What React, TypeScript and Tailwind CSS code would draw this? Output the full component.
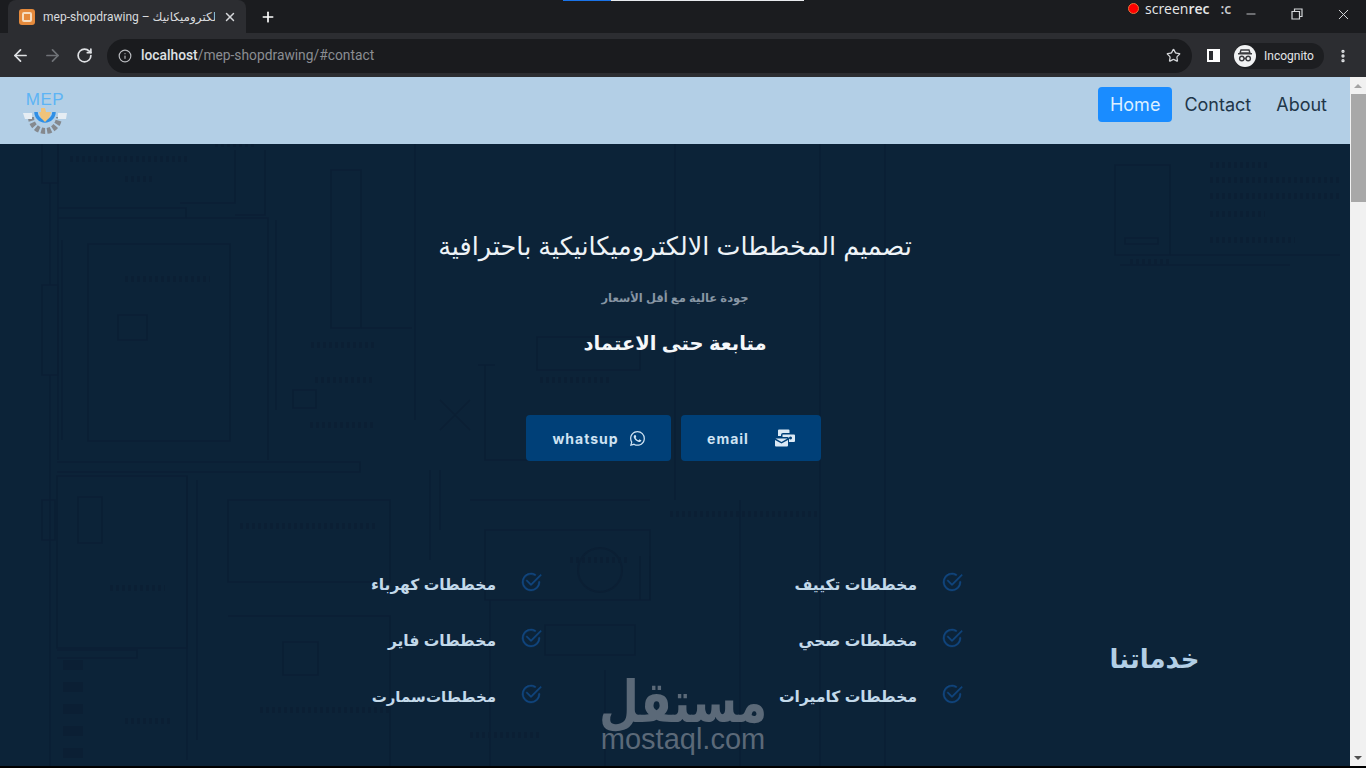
import React from "react";
import { ArrowLeft, ArrowRight, RotateCw, Info, Star, X, Plus, Minus, EllipsisVertical } from "lucide-react";
import { BsCheck2Circle, BsWhatsapp } from "react-icons/bs";

const AR = { fontFamily: '"Liberation Sans", "DejaVu Sans", sans-serif' };

const lines: string[] = [
  "M42 144V183H58V144", "M50 183V285", "M42 285H58V375H42Z", "M50 375V768", "M58 144V460",
  "M58 208H186V218H58", "M180 203H235V150M265 150V215H235", "M186 218H268V460", "M276 220V410",
  "M331 170H361V328H331Z", "M361 328H412", "M88 244H230V441H88Z", "M118 315H147V340H118Z",
  "M62 240V440", "M293 390H316V408H293Z", "M537 337H640V370H537Z", "M440 400L470 430M470 400L440 430",
  "M485 365V460H540", "M478 365H495", "M415 144V420", "M57 476H187V648H57Z", "M78 497H102V543H78Z",
  "M42 500H55V540H42Z", "M57 650H137V658H57", "M187 476V760", "M197 480V740", "M228 500H390V582H228Z",
  "M228 616H390V768", "M283 642H318V675H283Z", "M57 462H360V472H57", "M485 530H650V600H485Z",
  "M545 625H635V655H545Z", "M650 556V600M640 556V600", "M820 144V768", "M885 144V768", "M470 500H650",
  "M1115 165V255H1170V165Z", "M1170 255H1340", "M1120 265H1290", "M1125 238H1158V244H1125Z", "M490 600V768", "M605 670V768",
  "M430 470V560", "M440 470V530", "M675 144V500", "M740 500V768",
];
const blobs: [number, number, number][] = [
  [70, 159, 120], [125, 179, 30], [125, 279, 85], [215, 144, 40], [311, 345, 66], [315, 380, 60], [310, 425, 65],
  [240, 526, 135], [110, 588, 55], [260, 710, 130], [1210, 165, 60], [1210, 180, 130], [1210, 196, 130], [1210, 214, 55],
  [1210, 240, 85], [1130, 262, 40], [540, 380, 70], [670, 514, 150], [470, 735, 70], [125, 721, 45], [570, 560, 60],
];

function Blueprint() {
  return (
    <svg className="absolute inset-0 w-full h-full" viewBox="0 144 1350 622" preserveAspectRatio="none" fill="none">
      <g stroke="#0b1f34" strokeWidth="1.400">
        {lines.map((d) => (
          <path key={d} d={d} />
        ))}
      </g>
      <g stroke="#0b1f34" strokeWidth="6" strokeDasharray="3 3">
        {blobs.map(([x, y, w]) => (
          <path key={`${x}-${y}`} d={`M${x} ${y}h${w}`} />
        ))}
        <path d="M73 660V768" strokeWidth="20" strokeDasharray="10 12" />
      </g>
      <circle cx="600" cy="570" r="22" stroke="#0b1f34" strokeWidth="2" />
    </svg>
  );
}

function Logo() {
  return (
    <div className="relative w-[46px] h-[44px] mt-[15px]">
      <div className="absolute left-0 right-0 top-0 text-center text-[17px] leading-[15px] font-medium tracking-[0.5px] text-[#5db4f5]" style={{ fontFamily: '"Liberation Sans", sans-serif' }}>
        MEP
      </div>
      <svg className="absolute left-0 top-[14px]" width="46" height="30" viewBox="0 0 46 30" fill="none">
        <path d="M9 11a14 14 0 0 0 28 0" stroke="#85898e" strokeWidth="6" strokeDasharray="4 2" />
        <path d="M1 7h9v6H3zM36 7h9l-1 6h-8z" fill="#e6edf3" />
        <path d="M14 6a9 9 0 0 0 18 0" stroke="#2f8fe6" strokeWidth="3.500" />
        <path d="M19 2h4l1 4h5l-2 6-4 4-4-4-2-6h2z" fill="#f0c37a" />
      </svg>
    </div>
  );
}

function MailIcon() {
  return (
    <svg width="20" height="18" viewBox="0 0 20 18" fill="#dbe9f5">
      <path d="M3 1.500a1 1 0 0 1 1-1h9.500a1 1 0 0 1 1 1V4H8a2 2 0 0 0-2 2v1H3z" />
      <path d="M7.500 5.500H19a1 1 0 0 1 1 1V12a1 1 0 0 1-1 1h-5V9.500a1.500 1.500 0 0 0-1.500-1.500h-5zM15.500 7.500a1.500 1.500 0 1 0 .01 0z" />
      <path d="M0.500 9.500h12L6.500 13zM0 11l6.500 3.500L13 11v5.500a1 1 0 0 1-1 1H1a1 1 0 0 1-1-1z" />
    </svg>
  );
}

function Service({ label, tight }: { label: string; tight?: boolean }) {
  return (
    <div className="h-[56px] flex items-start gap-[24px]">
      <BsCheck2Circle className="text-[#11467f] stroke-[0.4px]" size={22} />
      <span className={tight ? "text-[15px] leading-[28px] font-bold text-[#c3d9ea] whitespace-nowrap [word-spacing:-4px]" : "text-[15.500px] leading-[28px] font-bold text-[#c3d9ea] whitespace-nowrap"} style={AR}>
        {label}
      </span>
    </div>
  );
}

export default function App() {
  return (
    <div className="relative w-[1366px] h-[768px] overflow-hidden bg-black flex flex-col">
      {/* tab strip */}
      <div className="h-[33px] bg-[#1b1c1f] flex items-end shrink-0" style={{ fontFamily: "Roboto, sans-serif" }}>
        <div className="ml-[8px] w-[238px] h-[33px] bg-[#2c2d31] rounded-t-[8px] flex items-center pl-[11px] pr-[9px] gap-[8px]">
          <div className="w-[16px] h-[16px] rounded-[3px] bg-[#e58a3c] flex items-center justify-center shrink-0">
            <div className="w-[10px] h-[10px] rounded-[2px] border-2 border-[#f6ddc0]" />
          </div>
          <span className="flex-1 overflow-hidden whitespace-nowrap text-[12px] text-[#d9dbde]" dir="ltr">
            mep-shopdrawing – <span style={AR}>الكتروميكانيك</span>
          </span>
          <X size={14} className="text-[#d5d7da]" strokeWidth={2.500} />
        </div>
        <div className="h-[33px] ml-[14px] flex items-center">
          <Plus size={16} className="text-white" strokeWidth={2.500} />
        </div>
        <div className="flex-1" />
        <div className="self-start h-[28px] w-[46px] flex items-center justify-center">
          <Minus size={14} className="text-[#d5d7da]" strokeWidth={1.500} />
        </div>
        <div className="self-start h-[28px] w-[46px] flex items-center justify-center">
          <svg width="12" height="12" viewBox="0 0 12 12" fill="none" stroke="#d5d7da" strokeWidth="1.200">
            <path d="M1 3.500h7.500V11H1zM3.500 3.500V1H11v7.500H8.500" />
          </svg>
        </div>
        <div className="self-start h-[28px] w-[46px] flex items-center justify-center">
          <X size={17} className="text-[#d5d7da]" strokeWidth={1.400} />
        </div>
      </div>

      {/* toolbar */}
      <div className="h-[44px] bg-[#2c2d31] flex items-center shrink-0 pl-[11px] pt-[1px]" style={{ fontFamily: "Roboto, sans-serif" }}>
        <ArrowLeft size={19} className="text-[#dfe1e4]" strokeWidth={2.200} />
        <ArrowRight size={19} className="text-[#6f7277] ml-[13px]" strokeWidth={2.200} />
        <RotateCw size={17} className="text-[#dfe1e4] ml-[14px]" strokeWidth={2.400} />
        <div className="ml-[14px] w-[1085px] h-[34px] rounded-full bg-[#1a1b1e] flex items-center pl-[11px] pr-[10px] text-[13.800px]">
          <Info size={14} className="text-[#b9bbbf]" />
          <span className="ml-[9px] font-medium text-[#dfe1e4]">localhost</span>
          <span className="text-[#8a8d92]">/mep-shopdrawing/#contact</span>
          <div className="flex-1" />
          <Star size={15} className="text-[#d5d7da] -translate-x-px" strokeWidth={2} />
        </div>
        <div className="ml-[15px] w-[13px] h-[13px] border-2 border-white bg-[#2c2d31] flex justify-end">
          <div className="w-[5px] h-full bg-white" />
        </div>
        <div className="ml-[14px] w-[90px] h-[26px] rounded-full bg-[#1d1e21] flex items-center">
          <div className="w-[22px] h-[22px] rounded-full bg-[#f1f2f3] flex items-center justify-center">
            <svg width="16" height="13" viewBox="0 0 16 13" fill="none" stroke="#3a3b3f" strokeWidth="1.400">
              <path d="M4 1h8l1 3H3zM1 4.800h14" />
              <circle cx="4.800" cy="9.500" r="2.200" />
              <circle cx="11.200" cy="9.500" r="2.200" />
              <path d="M7 9.500h2" />
            </svg>
          </div>
          <span className="ml-[8px] text-[12px] text-[#e3e5e8]">Incognito</span>
        </div>
        <EllipsisVertical size={16} className="text-[#e3e5e8] ml-[11px]" strokeWidth={3} />
      </div>

      {/* page */}
      <div className="flex-1 flex min-h-0">
        <div className="w-[1350px] flex flex-col">
          <nav className="h-[67px] shrink-0 bg-[#b3cfe6] flex items-start justify-between pl-[22px] pr-[11px]" style={{ fontFamily: "Inter, sans-serif" }}>
            <Logo />
            <div className="flex items-center text-[18px] text-[#1f3649] mt-[10px]">
              <a className="h-[35px] px-[12px] rounded-[4px] bg-[#1a8cff] text-[#dcefff] flex items-center">Home</a>
              <a className="h-[35px] pl-[12px] pr-[13px] flex items-center">Contact</a>
              <a className="h-[35px] px-[12px] flex items-center">About</a>
            </div>
          </nav>

          <main className="relative flex-1 min-h-0 overflow-hidden bg-[#0c2338] border-b-2 border-black">
            <Blueprint />
            <div className="relative flex flex-col items-center pt-[82px]" dir="rtl" style={AR}>
              <h1 className="text-[25.500px] leading-[40px] font-normal text-[#eef3f7]">تصميم المخططات الالكتروميكانيكية باحترافية</h1>
              <p className="mt-[22px] text-[11.500px] leading-[20px] font-bold text-[#8896a4]">جودة عالية مع أقل الأسعار</p>
              <h2 className="mt-[18px] text-[19.500px] leading-[34px] font-bold text-[#f4f7fa]">متابعة حتى الاعتماد</h2>
              <div className="mt-[55px] flex gap-[10px] ml-[-3px]" dir="ltr">
                <a className="w-[145px] h-[46px] rounded-[4px] bg-[#004078] flex items-center justify-center gap-[11px] text-[14px] font-bold tracking-[1px] text-[#cfe3f3]" style={{ fontFamily: "Inter, sans-serif" }}>
                  whatsup
                  <BsWhatsapp size={15} />
                </a>
                <a className="w-[140px] h-[46px] rounded-[4px] bg-[#004078] flex items-center justify-center gap-[26px] text-[14px] font-bold tracking-[1px] text-[#cfe3f3]" style={{ fontFamily: "Inter, sans-serif" }}>
                  email
                  <MailIcon />
                </a>
              </div>

              <div className="self-stretch mt-[110px] flex items-start">
                <div className="w-[387px] pt-[68px] pr-[4px] text-center text-[26px] leading-[40px] font-bold text-[#b3cfe6]">خدماتنا</div>
                <div className="w-[421px]">
                  <Service label="مخططات تكييف" />
                  <Service label="مخططات صحي" />
                  <Service label="مخططات كاميرات" />
                </div>
                <div>
                  <Service label="مخططات كهرباء" />
                  <Service label="مخططات فاير" />
                  <Service label="مخططات سمارت" tight />
                </div>
              </div>
            </div>

            {/* watermark */}
            <div className="absolute left-[601px] top-[537px] w-[164px] flex flex-col items-center text-[#5b6978]">
              <span className="text-[46px] leading-[42px] font-bold scale-y-125" dir="rtl" style={AR}>مستقل</span>
              <span className="mt-[6px] text-[29px] leading-[21px] whitespace-nowrap" style={{ fontFamily: '"Liberation Sans", sans-serif' }}>mostaql.com</span>
            </div>
          </main>
        </div>

        {/* scrollbar */}
        <aside className="w-[16px] bg-[#f1f1f1] flex flex-col items-center border-b-2 border-black">
          <div className="h-[17px] flex items-center text-[#a3a3a3]">
            <div className="w-0 h-0 border-x-[4px] border-x-transparent border-b-[4px] border-b-[#a3a3a3]" />
          </div>
          <div className="w-[15px] h-[108px] bg-[#a8a8a8]" />
          <div className="flex-1" />
          <div className="h-[17px] flex items-center">
            <div className="w-0 h-0 border-x-[4px] border-x-transparent border-t-[4px] border-t-[#505050]" />
          </div>
        </aside>
      </div>

      {/* capture overlays */}
      <div className="absolute left-[563px] top-0 w-[241px] h-[1px] bg-[#e8eaed]">
        <div className="w-[48px] h-full bg-[#1a73e8]" />
      </div>
      <div className="absolute left-[1128px] top-[-1px] h-[18px] flex items-center gap-[6px]" style={{ fontFamily: '"Open Sans", sans-serif' }}>
        <div className="w-[11px] h-[11px] rounded-full bg-[#ff0000] border border-[#e8733a]" />
        <span className="text-[14px] text-[#e6e7e9]">screen<span className="font-semibold">rec</span></span>
        <span className="ml-[5px] text-[14px] font-semibold text-[#c9cbce]">:c</span>
      </div>
    </div>
  );
}
